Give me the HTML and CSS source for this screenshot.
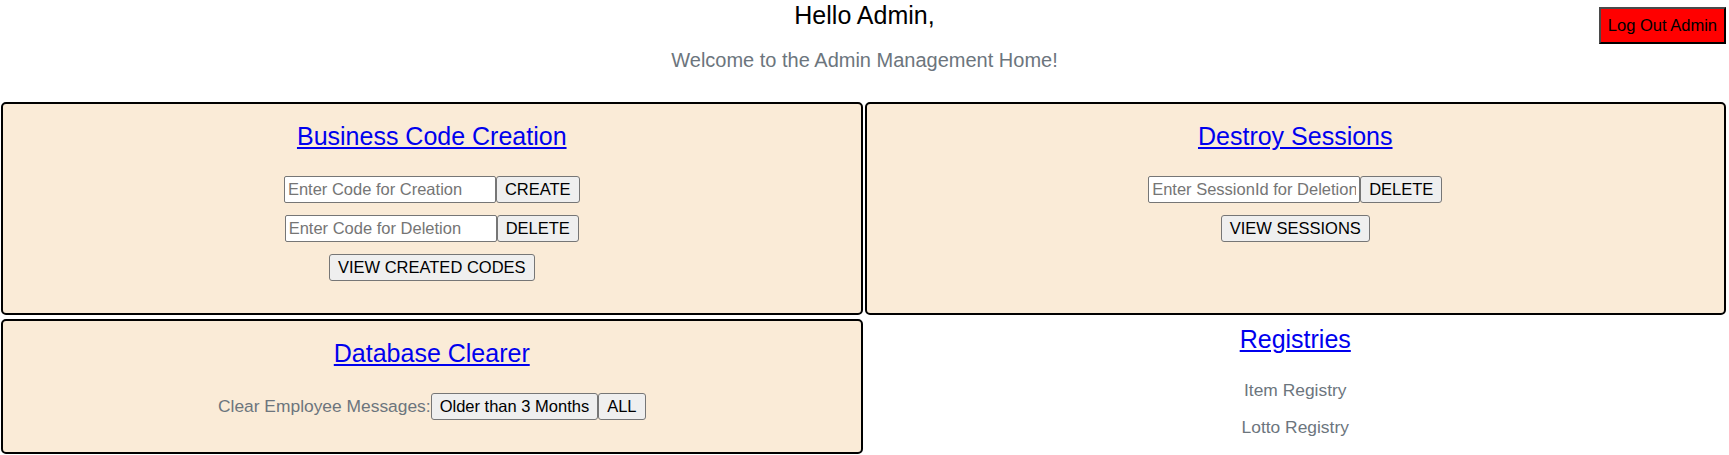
FILE: index.html
```html
<!DOCTYPE html>
<html lang="en">
<head>
<meta charset="utf-8">
<title>Admin Management Home</title>
<link rel="stylesheet" href="styles.css">
</head>
<body>
<header class="page-header">
  <h1 class="greeting">Hello Admin,</h1>
  <p class="welcome">Welcome to the Admin Management Home!</p>
  <button class="logout-btn" type="button">Log Out Admin</button>
</header>
<main class="panel-grid">
  <section class="panel">
    <h2 class="panel-title"><a href="#">Business Code Creation</a></h2>
    <div class="panel-row"><input class="field" type="text" placeholder="Enter Code for Creation"><button class="btn" type="button">CREATE</button></div>
    <div class="panel-row"><input class="field" type="text" placeholder="Enter Code for Deletion"><button class="btn" type="button">DELETE</button></div>
    <div class="panel-row"><button class="btn" type="button">VIEW CREATED CODES</button></div>
  </section>
  <section class="panel">
    <h2 class="panel-title"><a href="#">Destroy Sessions</a></h2>
    <div class="panel-row"><input class="field" type="text" placeholder="Enter SessionId for Deletion"><button class="btn" type="button">DELETE</button></div>
    <div class="panel-row"><button class="btn" type="button">VIEW SESSIONS</button></div>
  </section>
  <section class="panel">
    <h2 class="panel-title"><a href="#">Database Clearer</a></h2>
    <div class="panel-row"><span class="muted-label">Clear Employee Messages:</span><button class="btn" type="button">Older than 3 Months</button><button class="btn" type="button">ALL</button></div>
  </section>
  <section class="registries">
    <h2 class="panel-title"><a href="#">Registries</a></h2>
    <a class="registry-link" href="#">Item Registry</a>
    <a class="registry-link" href="#">Lotto Registry</a>
  </section>
</main>
</body>
</html>
```

FILE: styles.css
```css
* {
  box-sizing: border-box;
}

body {
  margin: 0;
  font-family: "Liberation Sans", Arial, sans-serif;
  color: #000;
  background: #fff;
}

.page-header {
  position: relative;
  display: flex;
  flex-direction: column;
  align-items: center;
  padding-top: 1px;
}

.greeting {
  margin: 0;
  font-size: 25px;
  line-height: 28px;
  font-weight: normal;
}

.welcome {
  margin: 20px 0 0;
  font-size: 20px;
  line-height: 23px;
  color: #6c757d;
}

.logout-btn {
  position: absolute;
  top: 7px;
  right: 3px;
  height: 37px;
  padding: 0 7px;
  font-family: "Liberation Sans", Arial, sans-serif;
  font-size: 16.5px;
  color: #000;
  background: #ff0000;
  border: 2px solid;
  border-color: #4a4a4a #000 #000 #4a4a4a;
  border-radius: 0;
}

.panel-grid {
  display: grid;
  grid-template-columns: 1fr 1fr;
  column-gap: 2px;
  row-gap: 4px;
  margin-top: 30px;
  padding: 0 3px 0 1px;
}

.panel {
  display: flex;
  flex-direction: column;
  align-items: center;
  background: #faebd7;
  border: 2px solid #000;
  border-radius: 5px;
  padding: 18px 0 32px;
}

.panel-title {
  margin: 0 0 26px;
  font-size: 25px;
  line-height: 28px;
  font-weight: normal;
}

.panel-title a {
  color: #0000ee;
  text-decoration: underline;
}

.panel-row {
  display: flex;
  justify-content: center;
  align-items: center;
}

.panel-row + .panel-row {
  margin-top: 12px;
}

.field {
  width: 212px;
  height: 27px;
  padding: 1px 3px;
  border: 1px solid #767676;
  border-radius: 2px;
  background: #fff;
  font-family: "Liberation Sans", Arial, sans-serif;
  font-size: 16.5px;
  color: #000;
}

.field::placeholder {
  color: #757575;
}

.btn {
  height: 27px;
  padding: 0 8px;
  border: 1px solid #767676;
  border-radius: 3px;
  background: #efefef;
  font-family: "Liberation Sans", Arial, sans-serif;
  font-size: 16.5px;
  color: #000;
}

.muted-label {
  font-size: 17.4px;
  color: #6c757d;
}

.registries {
  display: flex;
  flex-direction: column;
  align-items: center;
  padding-top: 6px;
}

.registries .panel-title {
  margin-bottom: 27px;
}

.registry-link {
  font-size: 17.4px;
  line-height: 20px;
  color: #6c757d;
  text-decoration: none;
}

.registry-link + .registry-link {
  margin-top: 17px;
}
```
